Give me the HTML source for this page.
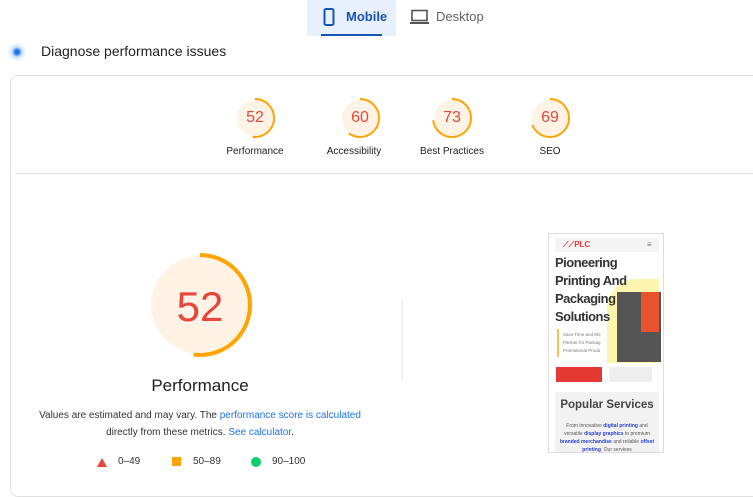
<!DOCTYPE html>
<html><head><style>
body{margin:0;width:753px;height:482px;overflow:hidden;background:#fff;font-family:"Liberation Sans",Arial,sans-serif;position:relative}
.a{position:absolute}
.lbl{font-size:10px;color:#212121;text-align:center;width:100px}
.s{font-size:16px;color:#e8453c;text-align:center;width:40px}
</style></head><body>
<div class="a" style="left:307px;top:0;width:89px;height:36px;background:#e8f0fe"></div>
<div class="a" style="left:321px;top:34px;width:61px;height:2px;background:#1a53b8"></div>
<svg class="a" style="left:323px;top:8px" width="12" height="18"><rect x="1.5" y="1" width="9" height="16" rx="1.5" fill="none" stroke="#1a53b8" stroke-width="2"/></svg>
<div class="a" style="left:346px;top:9px;font-size:13px;color:#1a53b8;font-weight:bold">Mobile</div>
<svg class="a" style="left:410px;top:9px" width="20" height="16"><rect x="2" y="1.5" width="15" height="10" fill="none" stroke="#555" stroke-width="1.6"/><rect x="0" y="13" width="19" height="2" fill="#555"/></svg>
<div class="a" style="left:436px;top:9px;font-size:13px;color:#5f6368">Desktop</div>
<div class="a" style="left:8px;top:43px;width:18px;height:18px;border-radius:50%;background:radial-gradient(#1a73e8 15%,#cfe2fd 40%,#fff 75%)"></div>
<div class="a" style="left:41px;top:43px;font-size:14px;color:#202124">Diagnose performance issues</div>
<div class="a" style="left:10px;top:75px;width:760px;height:420px;border:1px solid #e0e0e0;border-radius:8px"></div>
<div class="a" style="left:15px;top:173px;width:740px;height:1px;background:#e0e0e0"></div>
<svg class="a" style="left:0;top:0" width="753" height="482">
<g fill="#fff3e6" >
<circle cx="255" cy="118" r="18"/><circle cx="360" cy="118" r="18"/><circle cx="452" cy="118" r="18"/><circle cx="550" cy="118" r="18"/>
<circle cx="200" cy="305" r="49"/></g>
<g fill="none" stroke="#ffa400" stroke-width="2">
<circle cx="255" cy="118" r="19" stroke-dasharray="62 200" transform="rotate(-90 255 118)"/>
<circle cx="360" cy="118" r="19" stroke-dasharray="71.6 200" transform="rotate(-90 360 118)"/>
<circle cx="452" cy="118" r="19" stroke-dasharray="87.1 200" transform="rotate(-90 452 118)"/>
<circle cx="550" cy="118" r="19" stroke-dasharray="82.4 200" transform="rotate(-90 550 118)"/>
<circle cx="200" cy="305" r="50" stroke-width="4" stroke-dasharray="163.4 400" transform="rotate(-90 200 305)"/>
</g>
<line x1="402" y1="300" x2="402" y2="380" stroke="#e0e0e0"/>
<polygon points="102,458 107,467 97,467" fill="#e8453c"/>
<rect x="172" y="457" width="9" height="9" fill="#ffa400"/>
<circle cx="256" cy="462" r="5" fill="#0cce6b"/>
</svg>
<div class="a s" style="left:235px;top:109px">52</div>
<div class="a s" style="left:340px;top:109px">60</div>
<div class="a s" style="left:432px;top:109px">73</div>
<div class="a s" style="left:530px;top:109px">69</div>
<div class="a lbl" style="left:205px;top:146px">Performance</div>
<div class="a lbl" style="left:304px;top:146px">Accessibility</div>
<div class="a lbl" style="left:402px;top:146px">Best Practices</div>
<div class="a lbl" style="left:500px;top:146px">SEO</div>
<div class="a" style="left:150px;top:283px;width:100px;text-align:center;font-size:42px;color:#e8453c">52</div>
<div class="a" style="left:100px;top:376px;width:200px;text-align:center;font-size:17px;color:#212121">Performance</div>
<div class="a" style="left:30px;top:407px;width:340px;text-align:center;font-size:10px;line-height:17px;color:#333">Values are estimated and may vary. The <span style="color:#1a73e8">performance score is calculated</span><br>directly from these metrics. <span style="color:#1a73e8">See calculator</span>.</div>
<div class="a" style="left:118px;top:456px;font-size:10px;color:#333">0–49</div>
<div class="a" style="left:193px;top:456px;font-size:10px;color:#333">50–89</div>
<div class="a" style="left:272px;top:456px;font-size:10px;color:#333">90–100</div>
<div class="a" style="left:548px;top:233px;width:114px;height:218px;border:1px solid #ddd;overflow:hidden;background:#fff">
 <div class="a" style="left:6px;top:4px;width:104px;height:14px;background:#f5f5f5"></div>
 <div class="a" style="left:14px;top:6px;font-size:8px;font-weight:bold;color:#e53935">⟋⟋PLC</div>
 <div class="a" style="left:98px;top:6px;font-size:8px;color:#777">≡</div>
 <div class="a" style="left:58px;top:45px;width:52px;height:84px;background:#fbf5b0;border-radius:30px 0 0 0"></div>
 <div class="a" style="left:68px;top:58px;width:44px;height:70px;background:#555"></div>
 <div class="a" style="left:92px;top:58px;width:18px;height:40px;background:#e8522c"></div>
 <div class="a" style="left:6px;top:20px;font-size:13px;font-weight:bold;color:#333;line-height:18px;letter-spacing:-0.5px">Pioneering<br>Printing And<br>Packaging<br>Solutions</div>
 <div class="a" style="left:8px;top:95px;width:2px;height:28px;background:#f6c04a"></div>
 <div class="a" style="left:14px;top:97px;font-size:4.5px;color:#777;line-height:8px">Save Time and Mo<br>Partner for Packag<br>Promotional Produ</div>
 <div class="a" style="left:7px;top:133px;width:46px;height:15px;background:#e53935"></div>
 <div class="a" style="left:60px;top:133px;width:43px;height:15px;background:#eee"></div>
 <div class="a" style="left:6px;top:158px;width:104px;height:60px;background:#f2f2f2"></div>
 <div class="a" style="left:6px;top:165px;width:104px;text-align:center;font-size:11.5px;font-weight:bold;color:#444">Popular Services</div>
 <div class="a" style="left:8px;top:188px;width:100px;text-align:center;font-size:5px;color:#555;line-height:8px">From innovative <b style="color:#2b3fc9">digital printing</b> and versatile <b style="color:#2b3fc9">display graphics</b> to premium <b style="color:#2b3fc9">branded merchandise</b> and reliable <b style="color:#2b3fc9">offset printing</b>. Our services</div>
</div>
</body></html>
